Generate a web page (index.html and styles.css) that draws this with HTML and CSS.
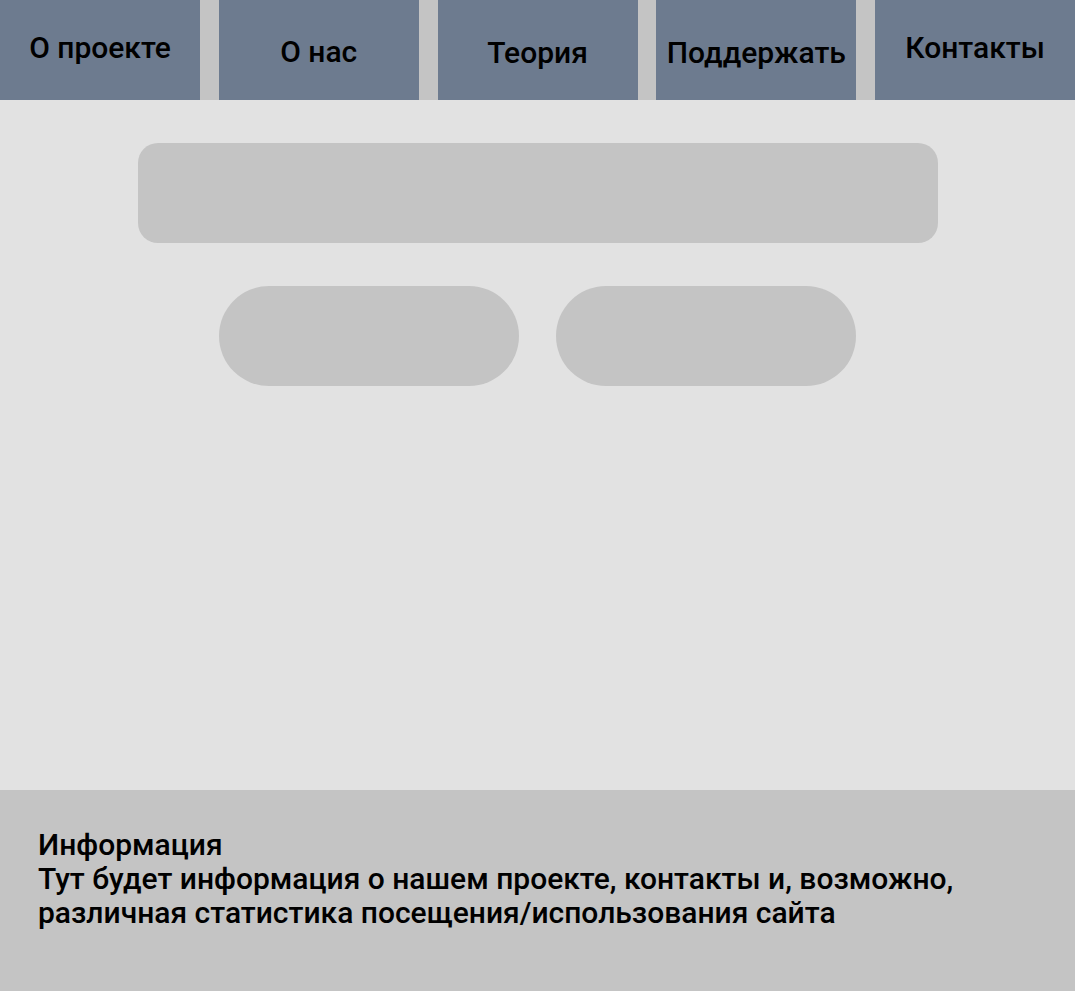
FILE: index.html
```html
<!DOCTYPE html>
<html lang="ru">
<head>
    <meta charset="UTF-8">
    <meta name="viewport" content="width=device-width, initial-scale=1.0">
    <title>Главная</title>
    <link rel="stylesheet" href="styles.css">
</head>
<body>
    <div class="header">
        <a href="#" class="nav-item nav-up">О проекте</a>
        <a href="#" class="nav-item nav-low">О нас</a>
        <a href="#" class="nav-item nav-lower">Теория</a>
        <a href="#" class="nav-item nav-lower">Поддержать</a>
        <a href="#" class="nav-item nav-up">Контакты</a>
    </div>

    <div class="content">
        <div class="banner"></div>
        <div class="buttons">
            <button class="pill-btn"></button>
            <button class="pill-btn"></button>
        </div>
    </div>

    <div class="footer">
        <p class="footer-text">Информация<br>Тут будет информация о нашем проекте, контакты и, возможно, различная статистика посещения/использования сайта</p>
    </div>
</body>
</html>
```

FILE: styles.css
```css
body {
    font-family: 'Roboto', 'Liberation Sans', sans-serif;
    margin: 0;
    padding: 0;
    color: #000;
    background-color: #e2e2e2;
}

.header {
    display: flex;
    justify-content: space-between;
    height: 100px;
    background-color: #c4c4c4;
}

.nav-item {
    width: 200px;
    display: flex;
    justify-content: center;
    align-items: center;
    box-sizing: border-box;
    background-color: #6d7b8f;
    color: #000;
    font-size: 30px;
    font-weight: 500;
    text-decoration: none;
}

.nav-up {
    padding-bottom: 6px;
}

.nav-low {
    padding-top: 2px;
}

.nav-lower {
    padding-top: 4px;
}

.content {
    height: 690px;
    display: flex;
    flex-direction: column;
    align-items: center;
    padding-top: 43px;
    box-sizing: border-box;
    gap: 43px;
}

.banner {
    width: 800px;
    height: 100px;
    border-radius: 20px;
    background-color: #c4c4c4;
}

.buttons {
    display: flex;
    gap: 37px;
}

.pill-btn {
    width: 300px;
    height: 100px;
    border: none;
    border-radius: 50px;
    background-color: #c4c4c4;
    cursor: pointer;
}

.footer {
    height: 201px;
    background-color: #c4c4c4;
    padding: 38px 38px 0;
    box-sizing: border-box;
}

.footer-text {
    margin: 0;
    font-size: 30px;
    font-weight: 500;
    line-height: 34px;
}
```
